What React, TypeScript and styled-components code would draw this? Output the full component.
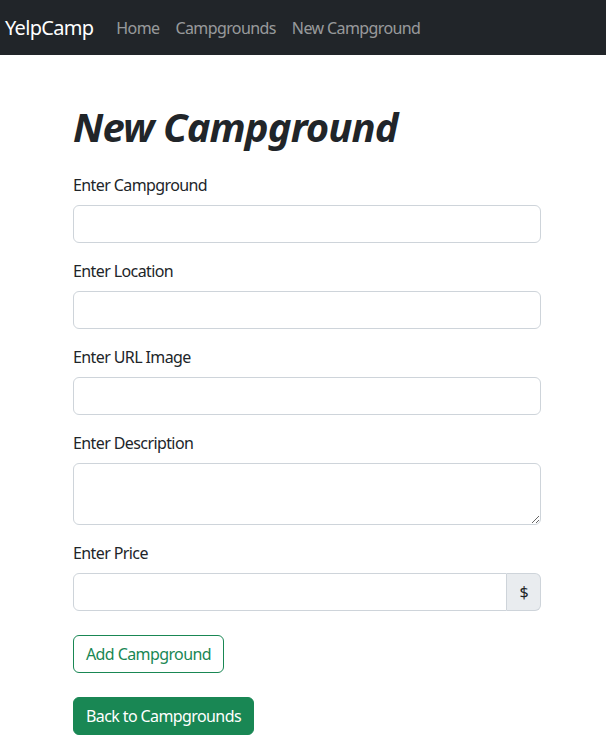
import styled, { createGlobalStyle } from "styled-components";

const GlobalStyle = createGlobalStyle`
  *, *::before, *::after {
    box-sizing: border-box;
  }

  body {
    margin: 0;
    font-family: "Noto Sans", "Open Sans", sans-serif;
    font-size: 16px;
    line-height: 1.5;
    letter-spacing: -0.6px;
    color: #212529;
    background: #fff;
  }
`;

const Navbar = styled.nav`
  display: flex;
  align-items: center;
  height: 55px;
  padding: 0 5px;
  background: #212529;
`;

const Brand = styled.a`
  margin-right: 15px;
  font-size: 20px;
  line-height: 30px;
  letter-spacing: -0.7px;
  color: #fff;
  text-decoration: none;
`;

const NavLinks = styled.div`
  display: flex;
`;

const NavLink = styled.a`
  padding: 8px;
  color: rgba(255, 255, 255, 0.55);
  text-decoration: none;
`;

const Container = styled.main`
  width: 468px;
  margin: 48px 0 0 73px;
`;

const Title = styled.h1`
  margin: 0 0 22px;
  font-size: 40px;
  font-weight: 700;
  font-style: italic;
  line-height: 1.2;
  letter-spacing: -0.9px;
`;

const Field = styled.div`
  margin-bottom: 16px;
`;

const Label = styled.label`
  display: block;
  margin-bottom: 8px;
`;

const inputStyles = `
  display: block;
  width: 100%;
  padding: 6px 12px;
  font: inherit;
  letter-spacing: inherit;
  color: #212529;
  background: #fff;
  border: 1px solid #ced4da;
  border-radius: 0.375rem;
  outline: none;
`;

const Input = styled.input`
  ${inputStyles}
  height: 38px;
`;

const TextArea = styled.textarea`
  ${inputStyles}
  height: 62px;
  resize: vertical;
`;

const InputGroup = styled.div`
  display: flex;

  & > input {
    flex: 1;
    border-top-right-radius: 0;
    border-bottom-right-radius: 0;
  }
`;

const Addon = styled.span`
  display: flex;
  align-items: center;
  padding: 6px 12px;
  background: #e9ecef;
  border: 1px solid #ced4da;
  border-left: none;
  border-radius: 0 0.375rem 0.375rem 0;
`;

const Button = styled.button<{ $solid?: boolean }>`
  display: block;
  height: 38px;
  margin-top: 24px;
  padding: 6px 12px;
  font: inherit;
  letter-spacing: inherit;
  color: ${(p) => (p.$solid ? "#fff" : "#198754")};
  background: ${(p) => (p.$solid ? "#198754" : "#fff")};
  border: 1px solid #198754;
  border-radius: 0.375rem;
  cursor: pointer;
`;

const App = () => {
  return (
    <>
      <GlobalStyle />
      <Navbar>
        <Brand href="#">YelpCamp</Brand>
        <NavLinks>
          <NavLink href="#">Home</NavLink>
          <NavLink href="#">Campgrounds</NavLink>
          <NavLink href="#">New Campground</NavLink>
        </NavLinks>
      </Navbar>
      <Container>
        <Title>New Campground</Title>
        <form>
          <Field>
            <Label htmlFor="title">Enter Campground</Label>
            <Input id="title" type="text" />
          </Field>
          <Field>
            <Label htmlFor="location">Enter Location</Label>
            <Input id="location" type="text" />
          </Field>
          <Field>
            <Label htmlFor="image">Enter URL Image</Label>
            <Input id="image" type="text" />
          </Field>
          <Field>
            <Label htmlFor="description">Enter Description</Label>
            <TextArea id="description" />
          </Field>
          <div>
            <Label htmlFor="price">Enter Price</Label>
            <InputGroup>
              <Input id="price" type="text" />
              <Addon>$</Addon>
            </InputGroup>
          </div>
          <Button type="submit">Add Campground</Button>
        </form>
        <Button $solid>Back to Campgrounds</Button>
      </Container>
    </>
  );
};

export default App;
